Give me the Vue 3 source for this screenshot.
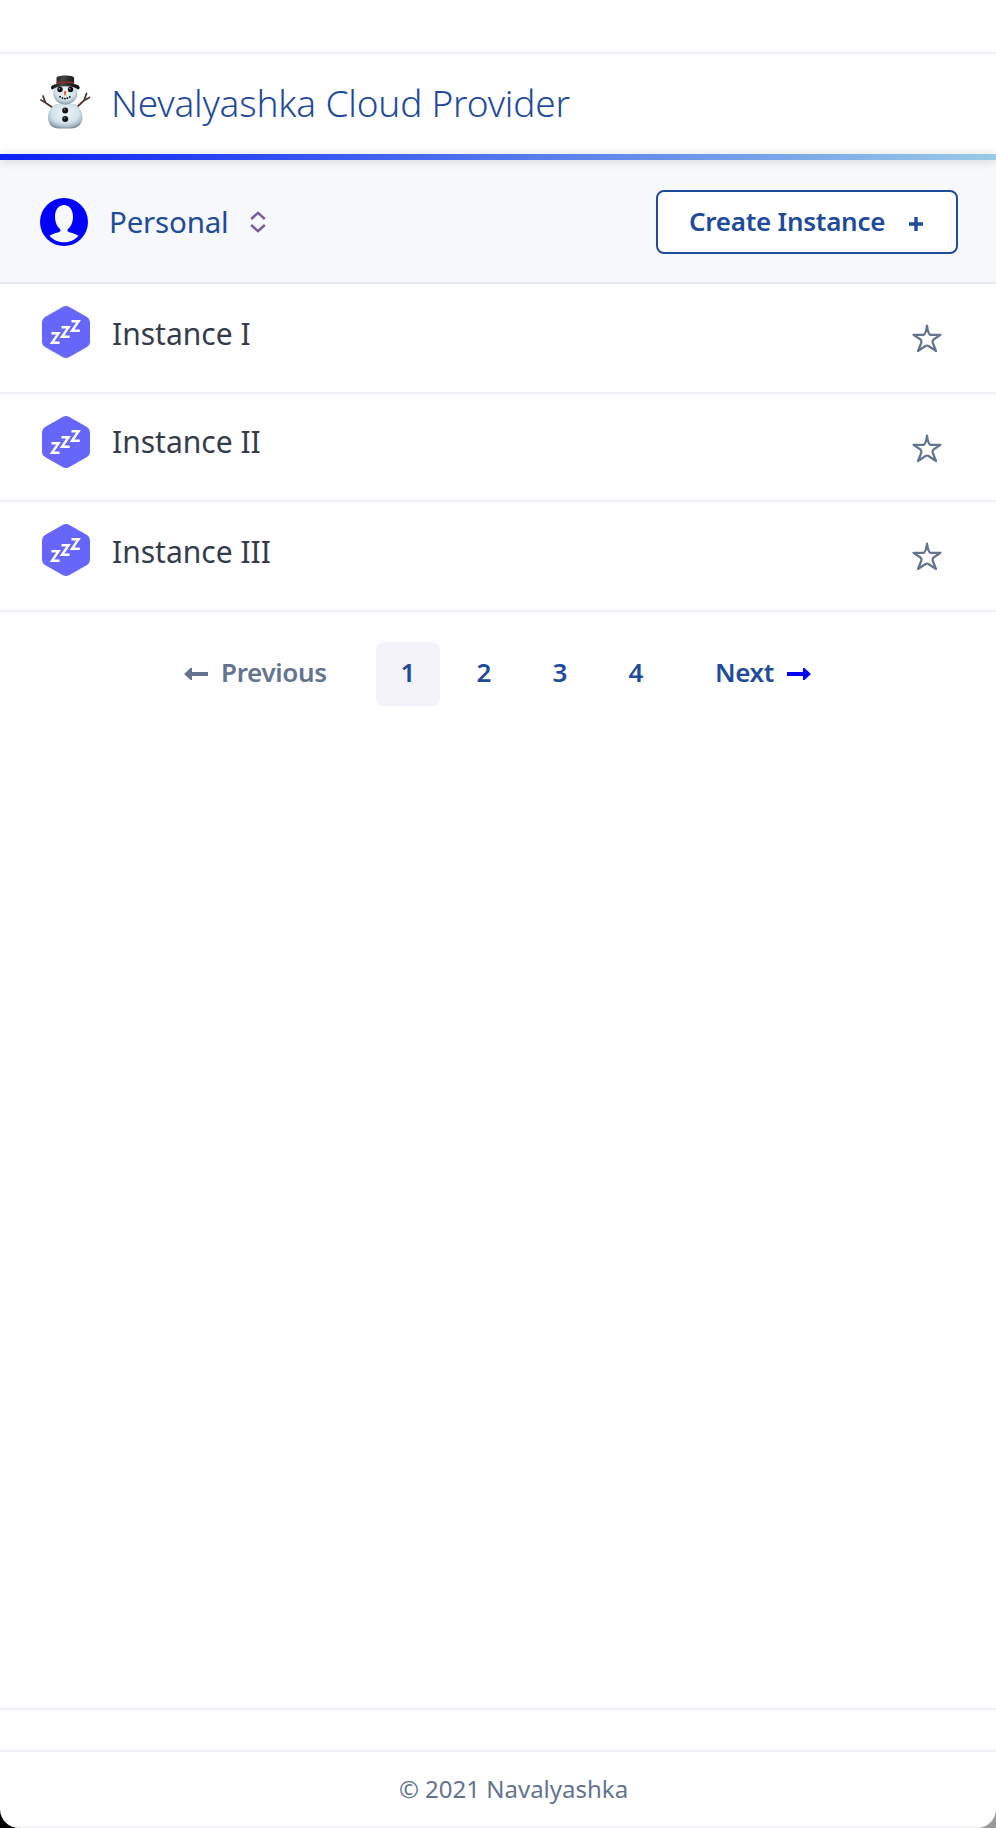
<script setup>
const instances = [
  { name: 'Instance I', cls: 'r1' },
  { name: 'Instance II', cls: 'r2' },
  { name: 'Instance III', cls: 'r3' },
]
const pages = [1, 2, 3, 4]
</script>

<template>
  <div class="backdrop">
    <div class="window">
      <div class="topstrip"></div>
      <header class="header">
        <svg class="snowman" width="54" height="56" viewBox="0 0 54 56">
          <defs>
            <radialGradient id="body" cx="0.5" cy="0.38" r="0.62">
              <stop offset="0" stop-color="#eef6fa" />
              <stop offset="0.65" stop-color="#d3e2ea" />
              <stop offset="0.9" stop-color="#a3b6c2" />
              <stop offset="1" stop-color="#7f919d" />
            </radialGradient>
            <linearGradient id="hat" x1="0" x2="1">
              <stop offset="0" stop-color="#111" />
              <stop offset="0.4" stop-color="#444" />
              <stop offset="1" stop-color="#080808" />
            </linearGradient>
          </defs>
          <path d="M13.500 32.500L7 28L2 25M6.500 27.500L4 21" fill="none" stroke="#54352b" stroke-width="1.800" stroke-linecap="round" />
          <path d="M37.500 32.500L45 25.500L50.500 22.500M45 25.500L47.500 18.500" fill="none" stroke="#54352b" stroke-width="1.800" stroke-linecap="round" />
          <path d="M17 29h19c4.500 3.500 7.500 8 7.500 13 0 7-5 11.500-11 11.500H20C13 53.500 9 49 9 42c0-5.500 3-10 8-13z" fill="url(#body)" />
          <ellipse cx="26.300" cy="18.500" rx="12" ry="11" fill="url(#body)" />
          <path d="M12 12.500c0-2 2.500-3 5.500-3.500V3c0-1.200 2.500-2.500 8.800-2.500S35.100 1.800 35.100 3v6c3 .5 5.500 1.500 5.500 3.500 0 1.200-.5 1.800-1.500 2-3-2.200-7-3.200-12.800-3.200s-9.800 1-12.800 3.200c-1-.2-1.500-.8-1.500-2z" fill="url(#hat)" />
          <path d="M17.500 8.200c4-1.500 13.500-1.500 17.600 0" fill="none" stroke="#a22a2a" stroke-width="1.300" />
          <circle cx="21" cy="14.500" r="2.700" fill="#111" />
          <circle cx="31.500" cy="14.500" r="2.700" fill="#111" />
          <circle cx="20.300" cy="13.700" r=".7" fill="#aaa" />
          <circle cx="30.800" cy="13.700" r=".7" fill="#aaa" />
          <path d="M24.700 16.500q1.500-1.200 2.800 0l-1 4q-.5.6-1 0z" fill="#e5601b" />
          <path d="M21 21.700Q26 25.500 31.500 21.500" fill="none" stroke="#111" stroke-width="1.800" stroke-linecap="round" stroke-dasharray=".1 2.500" />
          <circle cx="26.200" cy="35.500" r="3" fill="#171717" />
          <circle cx="26.200" cy="44" r="3" fill="#171717" />
          <circle cx="25.400" cy="34.600" r=".8" fill="#777" />
          <circle cx="25.400" cy="43.100" r=".8" fill="#777" />
        </svg>
        <h1>Nevalyashka Cloud Provider</h1>
      </header>
      <div class="rainbow"></div>

      <section class="toolbar">
        <svg class="avatar" width="48" height="48" viewBox="0 0 48 48">
          <circle cx="24" cy="24" r="24" fill="#00f" />
          <path d="M24 7c-5.500 0-9 5-9 11.500 0 5.500 2 10 5 12.500 1 1 .5 2.500-1 3.200-3 .8-6.500 1.300-9.500 3.500C12.500 41.500 18 44.200 24 44.200s11.500-2.700 14.500-6.500c-3-2.200-6.500-2.700-9.500-3.500-1.500-.7-2-2.200-1-3.200 3-2.500 5-7 5-12.500C33 12 29.500 7 24 7z" fill="#f7f8fc" />
        </svg>
        <span class="account">Personal</span>
        <svg class="updown" width="16" height="22" viewBox="0 0 16 22">
          <path d="M1.200 8L8 1.800l6.800 6.200M1.200 14L8 20.200l6.800-6.200" fill="none" stroke="#79589f" stroke-width="2.400" />
        </svg>
        <button class="create">
          <span>Create Instance</span>
          <svg width="14" height="14" viewBox="0 0 14 14"><path d="M7 0v14M0 7h14" stroke="#1f4b9b" stroke-width="3.400" /></svg>
        </button>
      </section>

      <ul class="list">
        <li v-for="i in instances" :key="i.name" :class="i.cls">
          <svg class="hex" width="48" height="52" viewBox="0 0 48 52">
            <path d="M21 .8q3-1.600 6 0L45 11q3 2 3 5v20q0 3-3 5L27 51.200q-3 1.600-6 0L3 41q-3-2-3-5V16q0-3 3-5z" fill="#6666fa" />
            <path d="M9.500 27.300H16.600L10 36.700H17.600M19.500 21.200H26.600L20 30.700H27.600M29.500 15.300H36.600L30 24.700H37.800" fill="none" stroke="#fff" stroke-width="2.400" />
          </svg>
          <span class="name">{{ i.name }}</span>
          <svg class="star" width="30" height="28" viewBox="0 0 30 28">
            <path d="M15 1.500Q16.200 10.500 18.500 10.800H28.500L21.500 15.500Q20 17 21 19.500L24 27L16.500 22Q15 21 13.500 22L6 27L9 19.500Q10 17 8.500 15.500L1.500 10.800H11.500Q13.800 10.500 15 1.500Z" fill="none" stroke="#64748f" stroke-width="2.200" stroke-linejoin="round" />
          </svg>
        </li>
      </ul>

      <nav class="pager">
        <a class="prev">
          <svg width="24" height="12" viewBox="0 0 24 12"><path d="M0 6L6.500 0H8V4H24V8H8V12H6.500z" fill="#64748f" /></svg>
          <span>Previous</span>
        </a>
        <a v-for="p in pages" :key="p" class="page" :class="{ active: p === 1 }">{{ p }}</a>
        <a class="next">
          <span>Next</span>
          <svg width="24" height="12" viewBox="0 0 24 12"><path d="M24 6L17.500 0H16V4H0V8H16V12H17.500z" fill="#00f" /></svg>
        </a>
      </nav>

      <div class="gap"></div>
      <div class="footstrip"></div>
      <footer>© 2021 Navalyashka</footer>
    </div>
  </div>
</template>

<style>
body { background: #fff; }
</style>

<style scoped>
* { box-sizing: border-box; }
.backdrop {
  width: 996px;
  height: 1828px;
  background: linear-gradient(90deg, #000 50%, #999 50%);
  font-family: "Noto Sans", "Open Sans", sans-serif;
}
.window {
  width: 996px;
  height: 1828px;
  display: flex;
  flex-direction: column;
  background: #fff;
  border-radius: 0 0 19px 19px;
  overflow: hidden;
}
.topstrip { height: 54px; border-bottom: 2px solid #eeeef5; }
.header { height: 100px; display: flex; padding-left: 39px; }
.snowman { margin-top: 21px; }
h1 {
  margin: 0 0 0 18px;
  font-weight: 300;
  font-size: 37px;
  line-height: 97px;
  letter-spacing: -0.2px;
  color: #1f4b9b;
  white-space: nowrap;
}
.rainbow {
  height: 6px;
  background: linear-gradient(90deg, #0a20f5, #99cbe6);
  box-shadow: 0 1px 10px rgba(0, 0, 0, 0.18);
  position: relative;
}
.toolbar {
  height: 124px;
  display: flex;
  background: #f7f8fc;
  border-bottom: 2px solid #e7e9f0;
  padding: 0 38px 0 40px;
}
.avatar { margin-top: 38px; }
.account {
  width: 120px;
  margin-left: 21px;
  font-size: 29.5px;
  line-height: 123px;
  letter-spacing: -0.2px;
  color: #1f4b9b;
}
.updown { margin: 51px 0 0 21px; }
.create {
  margin: 30px 0 0 auto;
  width: 302px;
  height: 64px;
  border: 2px solid #1f4b9b;
  border-radius: 8px;
  background: #fff;
  color: #1f4b9b;
  font: 600 26px/56px "Noto Sans", sans-serif;
  letter-spacing: -0.25px;
  padding: 0 33px 3px 31px;
  display: flex;
  justify-content: space-between;
  align-items: center;
  white-space: nowrap;
}
.create svg { margin-top: 7px; }
.list { margin: 0; padding: 0; list-style: none; }
.list li {
  display: flex;
  height: 110px;
  border-bottom: 2px solid #eeeef5;
  padding: 22px 54px 0 42px;
}
.list .r2 { height: 108px; }
.name {
  margin-left: 22px;
  font-size: 30px;
  line-height: 56px;
  color: #343c4b;
}
.r2 .name { margin-top: -2px; }
.star { margin: 18px 0 0 auto; }
.pager {
  margin-top: 30px;
  padding-left: 184px;
  display: flex;
  height: 64px;
  align-items: center;
  gap: 12px;
  font-size: 26px;
  line-height: 61px;
  font-weight: 600;
  color: #1f4b9b;
}
.prev, .next { display: flex; align-items: center; height: 64px; white-space: nowrap; }
.prev span, .next span { margin-top: -3px; }
.prev { width: 180px; color: #64748f; gap: 13px; letter-spacing: -0.35px; }
.page { width: 64px; height: 64px; text-align: center; border-radius: 8px; }
.active { background: #f5f3fa; }
.next { width: 130px; margin-left: 35px; gap: 13px; letter-spacing: -0.35px; }
.gap { flex: 1; border-bottom: 2px solid #eeeef5; }
.footstrip { height: 42px; border-bottom: 2px solid #eeeef5; }
footer {
  height: 76px;
  border-bottom: 2px solid #f3f3f9;
  text-align: center;
  font-size: 24px;
  line-height: 74px;
  padding-left: 31px;
  color: #64748f;
}
</style>
